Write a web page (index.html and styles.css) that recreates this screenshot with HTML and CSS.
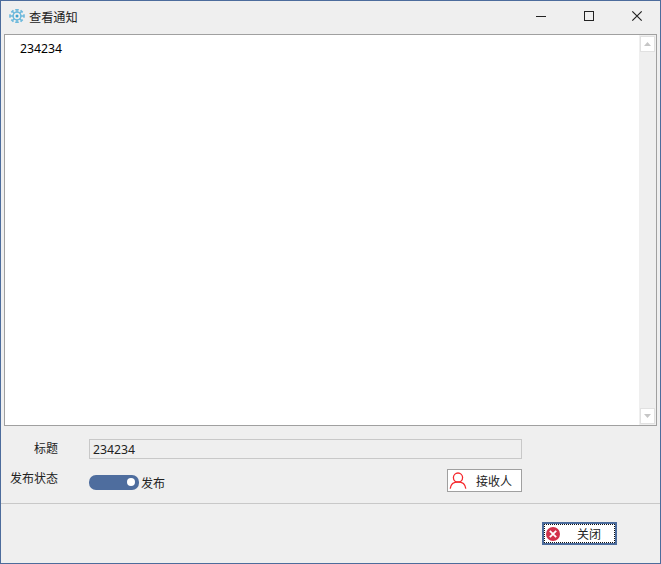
FILE: index.html
```html
<!DOCTYPE html>
<html lang="zh-CN">
<head>
<meta charset="utf-8">
<title>查看通知</title>
<link rel="stylesheet" href="styles.css">
</head>
<body>
<div class="window">
  <header class="titlebar">
    <svg class="app-icon" width="16" height="16" viewBox="0 0 16 16" fill="none" stroke="#6db9dc">
      <path d="M8 1.5v3M8 11.5v3M.8 8h3.7M11.5 8h3.7M3.2 3.2l2.2 2.2M10.6 10.6l2.2 2.2M12.8 3.2l-2.2 2.2M5.4 10.6l-2.2 2.2" stroke-width="1.5"/>
      <circle cx="8" cy="8" r="3.9" stroke-width="1.5"/>
      <circle cx="8" cy="8" r="1.5" fill="#3fa3cf" stroke="none"/>
      <path d="M6.2 1.7h3.6M6.2 14.3h3.6M1 6.3v3.4M15 6.3v3.4M2.3 4.4l2.1-2.1M11.6 2.3l2.1 2.1M2.3 11.6l2.1 2.1M11.6 13.7l2.1-2.1" stroke-width="1.5"/>
    </svg>
    <h1 class="title">查看通知</h1>
    <div class="controls">
      <svg width="12" height="12" viewBox="0 0 12 12"><path d="M1 6.5h10"/></svg>
      <svg width="12" height="12" viewBox="0 0 12 12" shape-rendering="crispEdges"><path d="M1.5 1.5h9v9h-9z"/></svg>
      <svg width="12" height="12" viewBox="0 0 12 12"><path d="M1.3 1.3l9.4 9.4M10.7 1.3l-9.4 9.4" stroke-width="1.2"/></svg>
    </div>
  </header>
  <main class="editor">
    <div class="content">234234</div>
    <div class="scrollbar">
      <div class="arrow"><svg width="7" height="4" viewBox="0 0 7 4"><path d="M0 4L3.5 0L7 4z"/></svg></div>
      <div class="arrow"><svg width="7" height="4" viewBox="0 0 7 4"><path d="M0 0L3.5 4L7 0z"/></svg></div>
    </div>
  </main>
  <section class="form">
    <div class="row">
      <span class="label">标题</span>
      <div class="field">234234</div>
    </div>
    <div class="row status">
      <span class="label">发布状态</span>
      <div class="toggle"><span class="knob"></span></div>
      <span class="state">发布</span>
      <div class="button receiver">
        <svg width="18" height="18" viewBox="0 0 18 18" fill="none" stroke="#f5282d" stroke-width="1.3"><circle cx="9" cy="5.6" r="4.6"/><path d="M1.2 16.7C1.7 12.5 4.8 9.9 9 9.9s7.3 2.6 7.8 6.8"/></svg>
        <span>接收人</span>
      </div>
    </div>
  </section>
  <footer class="footer">
    <div class="button close">
      <svg width="14" height="14" viewBox="0 0 14 14"><circle cx="7" cy="7" r="7" fill="#d2314a"/><path d="M3.8 3.8l6.4 6.4M10.2 3.8l-6.4 6.4" stroke="#fff" stroke-width="1.8"/></svg>
      <span>关闭</span>
    </div>
  </footer>
</div>
</body>
</html>
```
FILE: styles.css
```css
* { box-sizing: border-box; }
body {
  margin: 0;
  font: 12px/16px "Noto Sans CJK SC", sans-serif;
  color: #222;
}
svg { display: block; flex: none; }
.window {
  width: 661px;
  height: 564px;
  display: flex;
  flex-direction: column;
  background: #efefef;
  border: 1px solid #4c6c9c;
}
.titlebar {
  height: 33px;
  flex: none;
  display: flex;
  align-items: flex-start;
  padding: 7px 17px 0 8px;
}
.title { margin: 1px 0 0 4px; font-size: 12.2px; font-weight: 400; }
.controls { display: flex; gap: 36px; margin: 2px 0 0 auto; }
.controls path { fill: none; stroke: #222; }
.editor {
  height: 392px;
  flex: none;
  display: flex;
  margin: 0 3px;
  background: #fff;
  border: 1px solid #a0a0a0;
}
.content {
  flex: 1;
  padding: 5px 15px;
  color: #000;
  font: 12.25px/17px "Noto Sans", sans-serif;
}
.scrollbar {
  width: 17px;
  padding: 1px;
  display: flex;
  flex-direction: column;
  justify-content: space-between;
  background: #efefef;
}
.arrow {
  height: 16px;
  padding-bottom: 1px;
  display: grid;
  place-items: center;
  background: #fff;
  border: 1px solid #e1e1e1;
}
.arrow path { fill: #c6c6c6; }
.form { height: 77px; flex: none; padding-top: 13px; }
.row { display: flex; align-items: flex-start; }
.label { width: 57px; margin-right: 31px; padding-top: 1px; text-align: right; }
.field {
  width: 433px;
  height: 20px;
  padding: 1px 3px;
  border: 1px solid #c8c8c8;
  font: 12.25px/17px "Noto Sans", sans-serif;
}
.status { margin-top: 10px; }
.toggle {
  width: 50px;
  height: 15px;
  margin-top: 6px;
  padding: 0 4px 1px;
  display: flex;
  align-items: center;
  justify-content: flex-end;
  border-radius: 7px;
  background: #4e6d9e;
}
.knob { width: 8px; height: 8px; border-radius: 50%; background: #fff; }
.state { margin: 6px 0 0 2px; }
.button {
  width: 75px;
  height: 23px;
  display: flex;
  align-items: center;
  background: #fff;
}
.receiver { margin-left: 282px; padding-left: 1px; border: 1px solid #a0a0a0; }
.receiver span { margin-left: 9px; }
.footer {
  flex: 1;
  display: flex;
  justify-content: flex-end;
  padding: 18px 43px 0 0;
  border-top: 1px solid #c8c8c8;
}
.close {
  border: 2px solid #4c6c9c;
  outline: 1px dotted #111;
  outline-offset: -3px;
  padding-left: 2px;
}
.close span { margin-left: 17px; }
```
